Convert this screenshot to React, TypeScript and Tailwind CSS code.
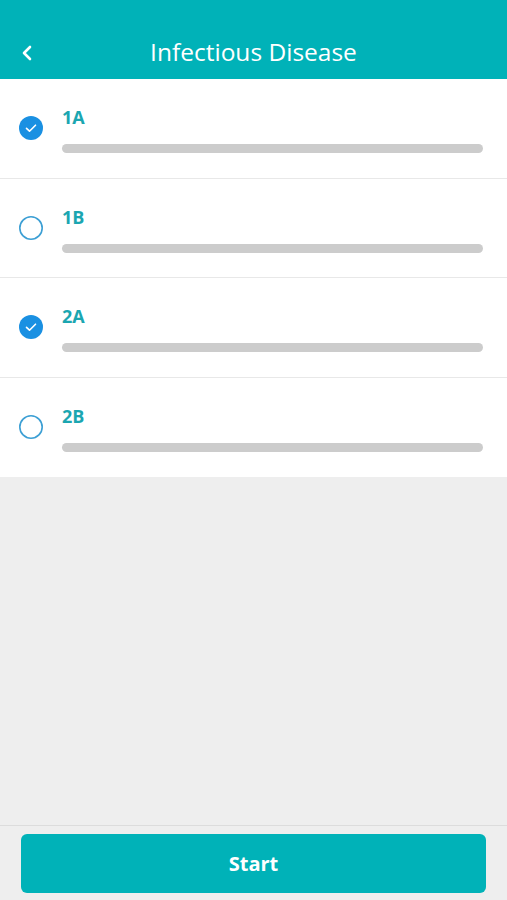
import { ChevronLeft } from 'lucide-react'

const items = [
  { label: '1A', checked: true },
  { label: '1B', checked: false },
  { label: '2A', checked: true },
  { label: '2B', checked: false },
]

function CheckCircle({ checked }: { checked: boolean }) {
  if (checked) {
    return (
      <svg width="26" height="26" viewBox="0 0 26 26">
        <circle cx="13" cy="13" r="12" fill="#1a90e2" />
        <path d="M8.5 13.3l3 2.9 6-6" fill="none" stroke="#fff" strokeWidth="1.6" strokeLinecap="round" strokeLinejoin="round" />
      </svg>
    )
  }
  return (
    <svg width="26" height="26" viewBox="0 0 26 26">
      <circle cx="13" cy="13" r="11.2" fill="#fff" stroke="#3c9fd4" strokeWidth="1.6" />
    </svg>
  )
}

export default function App() {
  return (
    <div className="flex h-[900px] flex-col bg-[#eeeeee] font-['Open_Sans',sans-serif]">
      {/* Header */}
      <div className="relative flex h-[79px] shrink-0 items-end justify-center bg-[#00b2b8] pb-[11px]">
        <ChevronLeft className="absolute left-[15px] bottom-[14px] h-[24px] w-[24px] text-white" strokeWidth={2.6} />
        <h1 className="text-[24.5px] leading-[32px] text-white">Infectious Disease</h1>
      </div>

      {/* List */}
      <div className="bg-white">
        {items.map((item, i) => (
          <div
            key={item.label}
            className={`flex h-[99.5px] items-start gap-[18px] pl-[18px] pr-[24px] pt-[36px] ${i < items.length - 1 ? 'border-b border-[#e8e8e8]' : ''}`}
          >
            <div className="shrink-0">
              <CheckCircle checked={item.checked} />
            </div>
            <div className="flex flex-1 flex-col">
              <span className="-mt-[10px] text-[18px] font-bold leading-[24px] text-[#1ba6b1]">{item.label}</span>
              <div className="mt-[15px] h-[9px] w-full rounded-full bg-[#cccccc]" />
            </div>
          </div>
        ))}
      </div>

      <div className="flex-1" />

      {/* Footer */}
      <div className="shrink-0 border-t border-[#dcdcdc] px-[21px] pb-[7px] pt-[8px]">
        <button className="flex h-[59px] w-full items-center justify-center rounded-[6px] bg-[#00b2b8] text-[20px] font-bold text-white">
          Start
        </button>
      </div>
    </div>
  )
}
